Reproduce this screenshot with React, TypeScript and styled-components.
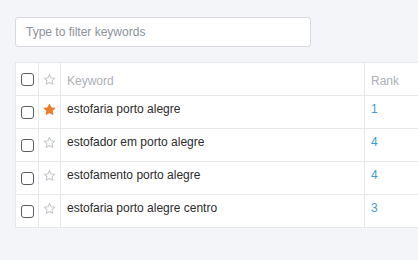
import * as React from 'react'
import styled, { createGlobalStyle } from 'styled-components'

const GlobalStyle = createGlobalStyle`
  html, body {
    margin: 0;
    padding: 0;
    background: #f4f5f9;
    font-family: 'Liberation Sans', Arial, sans-serif;
    overflow: hidden;
  }
`

const Page = styled.div`
  width: 418px;
  height: 260px;
  padding: 17px 0 0 15px;
  box-sizing: border-box;
  overflow: hidden;
`

const Filter = styled.input`
  display: block;
  width: 296px;
  height: 30px;
  box-sizing: border-box;
  padding: 0 10px;
  border: 1px solid #d7dae0;
  border-radius: 3px;
  background: #fff;
  font-family: 'Liberation Sans', Arial, sans-serif;
  font-size: 12px;
  color: #333;
  outline: none;
  &::placeholder {
    color: #8d9299;
  }
`

const Table = styled.div`
  margin-top: 15px;
  width: 520px;
  background: #fff;
  border: 1px solid #e6e8ec;
  border-right: none;
`

const Row = styled.div<{ $last?: boolean }>`
  display: grid;
  grid-template-columns: 23px 22px 304px 1fr;
  height: 32px;
  border-bottom: ${(p) => (p.$last ? 'none' : '1px solid #e6e8ec')};
`

const Cell = styled.div<{ $head?: boolean; $rank?: boolean }>`
  display: flex;
  align-items: center;
  padding-left: 6px;
  padding-top: ${(p) => (p.$head ? '4px' : '0')};
  padding-bottom: ${(p) => (p.$head ? '0' : '6px')};
  border-right: 1px solid #e6e8ec;
  font-size: 12px;
  color: ${(p) => (p.$head ? '#abb0b7' : p.$rank ? '#3e9bd6' : '#2b2b2b')};
  &:last-child {
    border-right: none;
  }
`

const IconCell = styled.div<{ $lift?: number }>`
  display: flex;
  align-items: center;
  justify-content: center;
  padding-bottom: ${(p) => (p.$lift ? `${p.$lift}px` : '0')};
  border-right: 1px solid #e6e8ec;
`

const Box = styled.span`
  display: block;
  width: 13px;
  height: 13px;
  box-sizing: border-box;
  margin-top: 1px;
  border: 1px solid #5a5e63;
  border-radius: 3px;
  background: #fff;
`

function Star({ filled }: { filled?: boolean }) {
  return (
    <svg width="13" height="13" viewBox="0 0 24 24">
      <path
        d="M12 2.5l2.9 6.4 6.9.7-5.2 4.6 1.5 6.8L12 17.5 5.9 21l1.5-6.8L2.2 9.6l6.9-.7z"
        fill={filled ? '#f07c2b' : 'none'}
        stroke={filled ? '#f07c2b' : '#c5c9ce'}
        strokeWidth="2"
        strokeLinejoin="round"
      />
    </svg>
  )
}

const rows = [
  { keyword: 'estofaria porto alegre', rank: 1, starred: true },
  { keyword: 'estofador em porto alegre', rank: 4, starred: false },
  { keyword: 'estofamento porto alegre', rank: 4, starred: false },
  { keyword: 'estofaria porto alegre centro', rank: 3, starred: false },
]

export default function App() {
  return (
    <Page>
      <GlobalStyle />
      <Filter placeholder="Type to filter keywords" />
      <Table>
        <Row>
          <IconCell><Box /></IconCell>
          <IconCell><Star /></IconCell>
          <Cell $head>Keyword</Cell>
          <Cell $head>Rank</Cell>
        </Row>
        {rows.map((r, i) => (
          <Row key={r.keyword} $last={i === rows.length - 1}>
            <IconCell><Box /></IconCell>
            <IconCell $lift={5}><Star filled={r.starred} /></IconCell>
            <Cell>{r.keyword}</Cell>
            <Cell $rank>{r.rank}</Cell>
          </Row>
        ))}
      </Table>
    </Page>
  )
}
